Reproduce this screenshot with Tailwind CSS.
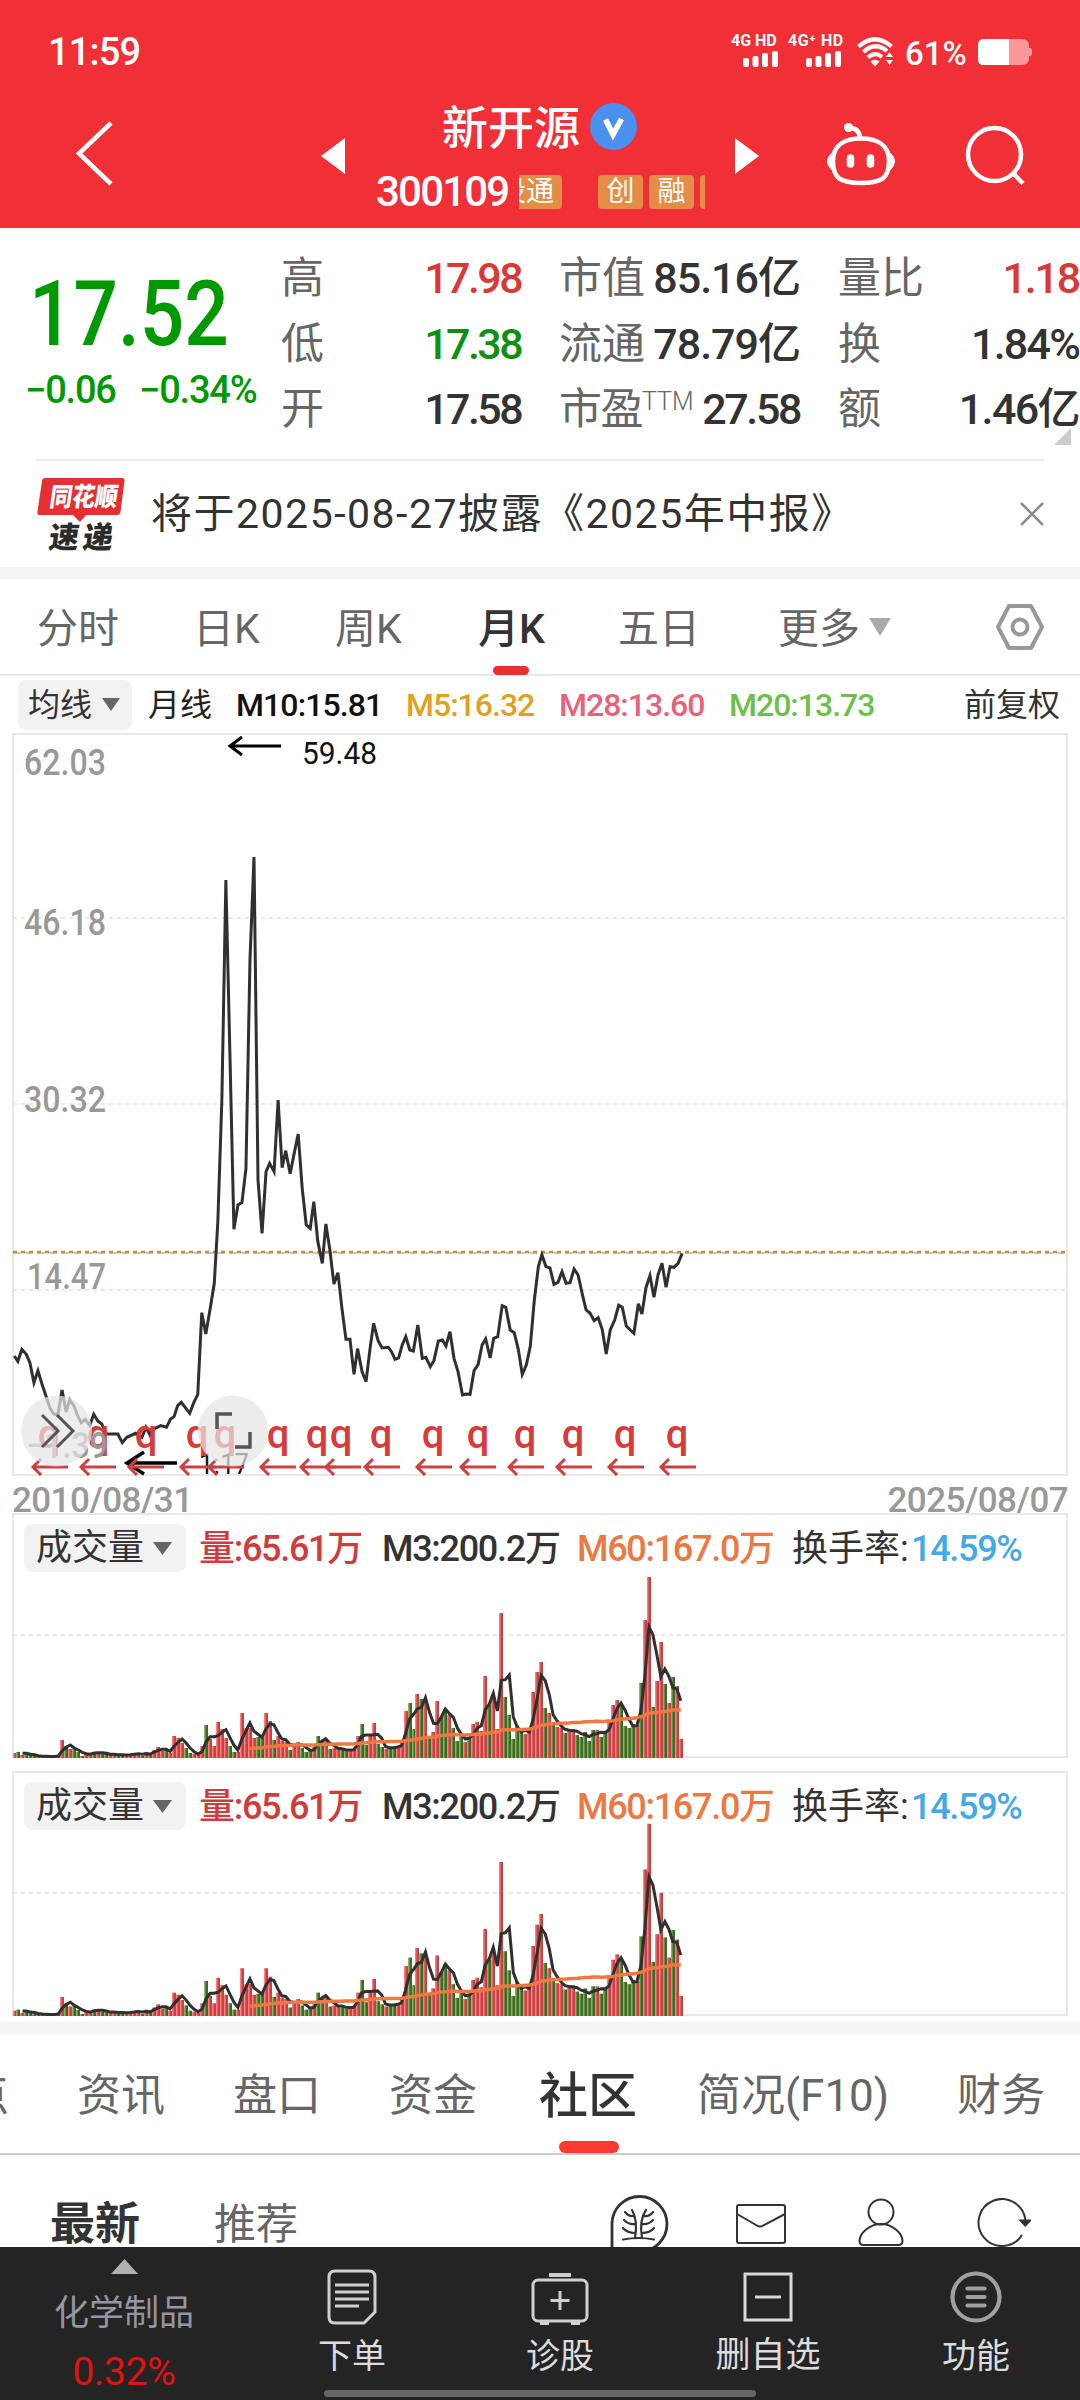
<!DOCTYPE html>
<html lang="zh-CN">
<head>
    <meta charset="UTF-8">
    <meta name="viewport" content="width=device-width, initial-scale=1.0">
    <title>新开源 300109</title>
    <script src="https://cdn.jsdelivr.net/npm/@tailwindcss/browser@4"></script>
</head>
<body class="bg-white">
<div class="w-[1080px] h-[2400px] overflow-hidden flex flex-col bg-white text-[#333] whitespace-nowrap font-['Roboto','Noto_Sans_CJK_SC',sans-serif]">

    <!-- Header -->
    <header class="h-[228px] shrink-0 bg-[#f12f37] text-white flex flex-col">
        <div class="h-[100px] pl-[48px] pr-[48px] flex items-center justify-between">
            <span class="pt-[3px] text-[38px] font-medium leading-none tracking-[-0.8px]">11:59</span>
            <div class="flex items-start h-8">
                <div class="w-[57px] flex flex-col">
                    <span class="text-[16px] leading-[14px] font-bold">4G HD</span>
                    <svg class="ml-3 mt-[3px] w-[35px] h-4" viewBox="0 0 35 16" fill="white"><rect y="7" width="6" height="9" rx="2"/><rect x="9.500" y="5" width="6" height="11" rx="2"/><rect x="19" y="2" width="6" height="14" rx="2"/><rect x="29" y="0" width="6" height="16" rx="2"/></svg>
                </div>
                <div class="w-[69px] flex flex-col">
                    <span class="text-[16px] leading-[14px] font-bold tracking-[0.6px]">4G⁺ HD</span>
                    <svg class="ml-[18px] mt-[3px] w-[35px] h-4" viewBox="0 0 35 16" fill="white"><rect y="7" width="6" height="9" rx="2"/><rect x="9.500" y="5" width="6" height="11" rx="2"/><rect x="19" y="2" width="6" height="14" rx="2"/><rect x="29" y="0" width="6" height="16" rx="2"/></svg>
                </div>
                <svg class="w-[38px] h-[30px] mt-[3px]" viewBox="0 0 38 30" fill="none" stroke="white" stroke-width="4.200">
                    <path d="M1.500 9.500Q18 -5 34.500 9.500"/><path d="M6.500 15Q18 4 30 14"/><path d="M11 20.500Q18 14 25 20"/>
                    <path d="M13.500 24.500Q18 21 22.500 24.500L18 29.500z" fill="white" stroke="none"/>
                    <path d="M29 20h7l-3.500-5zM29 23h7l-3.500 5z" fill="white" stroke="none"/>
                </svg>
                <span class="ml-2.5 mt-[7px] w-[73px] text-[33px] leading-[26px] font-medium">61%</span>
                <svg class="mt-1 w-[54px] h-7" viewBox="0 0 54 28"><path d="M6 1h38q7 0 7 7h0v2h1q2 0 2 3v2q0 3-2 3h-1v2q0 7-7 7H6q-6 0-6-6V7q0-6 6-6z" fill="#fb979b"/><path d="M31 1H6Q0 1 0 7v14q0 6 6 6h25z" fill="white"/></svg>
            </div>
        </div>
        <div class="h-[128px] flex">
            <svg class="ml-[72px] mt-5 w-[50px] h-[68px]" viewBox="0 0 50 68" fill="none" stroke="white" stroke-width="4.500"><path d="M39 3L7 33.500 39 64"/></svg>
            <svg class="ml-[199px] mt-[38px] w-6 h-9" viewBox="0 0 24 36" fill="white"><path d="M0 18L24 0v36z"/></svg>
            <div class="ml-[31px] w-[329px] flex flex-col">
                <div class="flex pl-[66px] h-[52px] items-center">
                    <span class="pt-1 text-[46px] leading-none font-medium">新开源</span>
                    <svg class="ml-[10px] w-[47px] h-[47px]" viewBox="0 0 47 47"><circle cx="23.500" cy="23.500" r="23.500" fill="#4a90ee"/><path d="M15.500 16.500L23 31.500 31.500 16" fill="none" stroke="white" stroke-width="5.500"/></svg>
                </div>
                <div class="mt-[23px] flex items-center h-[34px]">
                    <span class="w-[143px] shrink-0 text-[42px] leading-none font-medium tracking-[-1.8px]">300109</span>
                    <div class="w-[186px] h-[34px] flex overflow-hidden text-[28px] leading-[34px] text-center">
                        <span class="w-[43px] shrink-0 bg-[#e58c46] rounded-r flex justify-end pr-2 overflow-hidden">股通</span>
                        <span class="ml-9 w-[45px] shrink-0 bg-[#e58c46] rounded">创</span>
                        <span class="ml-1.5 w-[45px] shrink-0 bg-[#e58c46] rounded">融</span>
                        <span class="ml-1.5 w-5 bg-[#e58c46] rounded-l shrink-0"></span>
                    </div>
                </div>
            </div>
            <svg class="ml-[30px] mt-[38px] w-6 h-9" viewBox="0 0 24 36" fill="white"><path d="M24 18L0 0v36z"/></svg>
            <svg class="ml-[67px] mt-[22px] w-[70px] h-[64px]" viewBox="0 0 70 64" fill="none" stroke="white" stroke-width="4.500">
                <path d="M35 16.500C50 16.500 63 22 63 39S56 61 35 61 7 56 7 39 20 16.500 35 16.500z"/>
                <path d="M34 17Q34 6 23 6"/><circle cx="22.500" cy="5.500" r="4.500" fill="white" stroke="none"/>
                <path d="M6 32Q-2 39 6 47z M64 32Q72 39 64 47z" fill="white" stroke-width="2"/>
                <path d="M24.500 36v6M44.500 36v6" stroke-width="7.500" stroke-linecap="round"/>
            </svg>
            <svg class="ml-[68px] mt-[24px] w-[62px] h-[62px]" viewBox="0 0 62 62" fill="none" stroke="white" stroke-width="4.500"><circle cx="30.500" cy="30.500" r="26.500"/><path d="M49 49l10 10.500"/></svg>
        </div>
    </header>

    <!-- Quote -->
    <section class="h-[231px] shrink-0 flex relative">
        <div class="w-[281px] shrink-0 text-[#009900]">
            <div class="mt-[45px] ml-[29px] h-[84px] text-[90px] leading-[84px] font-medium origin-left scale-x-[0.87]">17.52</div>
            <div class="mt-[13px] ml-[25px] flex text-[38px] leading-[40px] font-medium tracking-[-1.2px]">
                <span class="w-[114px]">−0.06</span>
                <span>−0.34%</span>
            </div>
        </div>
        <div class="mt-[18px] w-[240px] shrink-0 text-[43px] leading-[65.500px]">
            <div class="flex justify-between"><span class="text-[#666]">高</span><span class="text-[#dc3838] font-medium tracking-[-2.6px]">17.98</span></div>
            <div class="flex justify-between"><span class="text-[#666]">低</span><span class="text-[#109010] font-medium tracking-[-2.6px]">17.38</span></div>
            <div class="flex justify-between"><span class="text-[#666]">开</span><span class="font-medium tracking-[-2.6px]">17.58</span></div>
        </div>
        <div class="mt-[18px] ml-[38px] w-[241px] shrink-0 text-[43px] leading-[65.500px]">
            <div class="flex justify-between"><span class="text-[#666]">市值</span><span class="font-medium tracking-[-1px]">85.16亿</span></div>
            <div class="flex justify-between"><span class="text-[#666]">流通</span><span class="font-medium tracking-[-1px]">78.79亿</span></div>
            <div class="flex justify-between"><span class="text-[#666] flex tracking-[-1.5px]">市盈<span class="text-[25px] leading-[50px] font-light tracking-normal">TTM</span></span><span class="font-medium tracking-[-2.4px]">27.58</span></div>
        </div>
        <div class="mt-[18px] ml-[38px] w-[241px] shrink-0 text-[43px] leading-[65.500px]">
            <div class="flex justify-between"><span class="text-[#666]">量比</span><span class="text-[#dc3838] font-medium tracking-[-2.2px]">1.18</span></div>
            <div class="flex justify-between"><span class="text-[#666]">换</span><span class="font-medium tracking-[-1.8px]">1.84%</span></div>
            <div class="flex justify-between"><span class="text-[#666]">额</span><span class="font-medium tracking-[-1.6px]">1.46亿</span></div>
        </div>
        <svg class="absolute right-[9px] bottom-[14px] w-[17px] h-[17px]" viewBox="0 0 17 17" fill="#ccc"><path d="M17 0v17H0z"/></svg>
    </section>

    <!-- News -->
    <section class="h-[108px] shrink-0 mx-9 border-t-2 border-[#eee] flex items-center">
        <svg class="w-[92px] h-[78px]" viewBox="0 0 92 78">
            <path d="M9 3h77q3 0 2.500 3l-4 31q-.5 3-3.500 3H50l-6 7-7-7H4q-3 0-2.600-3L6 6q.4-3 3-3z" fill="#e53033"/>
            <text x="17" y="31" font-size="26" font-weight="900" fill="white" textLength="68" lengthAdjust="spacingAndGlyphs" transform="skewX(-8)">同花顺</text>
            <text x="22" y="73" font-size="30" font-weight="900" fill="#2b2b2b" textLength="64" lengthAdjust="spacing" transform="skewX(-8)">速递</text>
        </svg>
        <span class="ml-[23px] text-[41px] leading-none tracking-[1.5px]">将于2025-08-27披露《2025年中报》</span>
        <svg class="ml-auto w-6 h-6" viewBox="0 0 24 24" stroke="#8a8a8a" stroke-width="2.500"><path d="M1 1l22 22M23 1L1 23"/></svg>
    </section>
    <div class="h-3 shrink-0 bg-[#f4f4f4]"></div>

    <!-- Period tabs -->
    <nav class="h-[97px] shrink-0 border-b-2 border-[#e9e9e9] flex relative text-[41px] leading-[101px] text-[#666]">
        <span class="ml-[37px] w-[156px]">分时</span>
        <span class="w-[142px]">日K</span>
        <span class="w-[143px]">周K</span>
        <span class="w-[140px] font-medium text-[#333]">月K</span>
        <span class="w-[160px]">五日</span>
        <span class="w-[91px]">更多</span>
        <svg class="mt-[39px] w-[22px] h-[18px]" viewBox="0 0 22 18" fill="#aaa"><path d="M0 0h22L11 18z"/></svg>
        <svg class="ml-[104px] mt-6 w-[50px] h-[48px]" viewBox="0 0 50 48" fill="none" stroke="#999" stroke-width="4" stroke-linejoin="round"><path d="M14 3h22l11 21-11 21H14L3 24z"/><circle cx="25" cy="24" r="7.500"/></svg>
        <span class="absolute left-[493px] -bottom-px w-9 h-[9px] rounded-full bg-[#e93030]"></span>
    </nav>

    <!-- Moving average legend -->
    <div class="h-[57px] shrink-0 flex items-center text-[32px] leading-[52px] font-medium">
        <span class="ml-[18px] w-[114px] h-[50px] pl-2.5 pr-3 rounded-lg bg-[#f2f2f2] flex items-center justify-between font-normal">均线<svg class="w-[18px] h-[13px]" viewBox="0 0 18 13" fill="#666"><path d="M0 0h18L9 13z"/></svg></span>
        <span class="ml-4 w-[88px] font-normal text-[#222]">月线</span>
        <span class="w-[170px] text-[#111] tracking-[-0.9px]">M10:15.81</span>
        <span class="w-[153px] text-[#e0a020] tracking-[-1px]">M5:16.32</span>
        <span class="w-[170px] text-[#e8637a] tracking-[-1px]">M28:13.60</span>
        <span class="w-[235px] text-[#6cc04a] tracking-[-1px]">M20:13.73</span>
        <span class="font-normal">前复权</span>
    </div>

    <!-- Price chart -->
    <svg class="w-[1080px] h-[743px] shrink-0 block" viewBox="0 0 1080 743" fill="none">
        <rect x="13" y="1" width="1054" height="741" stroke="#e8e8e8" stroke-width="2"/>
        <path d="M13 185h1054M13 371h1054M13 557h1054" stroke="#e8e8e8" stroke-width="2" stroke-dasharray="4 4"/>
        <g font-size="36" font-weight="500" fill="#999">
            <text x="24" y="42" textLength="82" lengthAdjust="spacingAndGlyphs">62.03</text>
            <text x="24" y="202" textLength="82" lengthAdjust="spacingAndGlyphs">46.18</text>
            <text x="24" y="379" textLength="82" lengthAdjust="spacingAndGlyphs">30.32</text>
            <text x="27" y="556" textLength="79" lengthAdjust="spacingAndGlyphs">14.47</text>
        </g>
        <path d="M13 520h1054" stroke="#c4b49c" stroke-width="1.500" stroke-dasharray="8 4"/>
        <path d="M13 519h1054" stroke="#cc8c40" stroke-width="2.500" stroke-dasharray="4 4"/>
        <path d="M281 13H230M242 4l-12 9 12 9" stroke="#000" stroke-width="3"/>
        <text x="302" y="31" font-size="31" fill="#111" textLength="75" lengthAdjust="spacingAndGlyphs">59.48</text>
        <polyline transform="translate(0 487) scale(.4464 .3333)" vector-effect="non-scaling-stroke" stroke="#303030" stroke-width="3" points="32,408 40,424 49,388 59,403 67,428 76,488 85,452 94,492 103,528 112,565 121,583 130,583 139,510 148,576 156,540 165,556 174,588 182,608 191,598 201,616 210,583 219,603 228,612 238,642 264,642 274,668 284,652 304,640 318,652 327,622 336,645 345,627 360,617 373,622 382,597 390,590 398,557 406,547 425,580 435,545 443,524 452,278 461,342 471,265 480,190 488,5 497,-360 506,-1020 515,-500 524,28 533,-45 542,-52 551,-155 560,-780 569,-1089 578,-120 587,40 596,-145 604,-170 614,-145 623,-360 632,-157 640,-208 650,-139 659,-200 668,-258 677,-95 686,15 695,25 703,-55 712,65 722,130 730,12 739,90 748,192 757,158 766,265 775,358 784,358 793,463 801,386 811,455 820,485 829,385 837,310 847,362 856,384 870,382 877,395 885,418 893,414 901,375 909,350 918,390 926,393 936,315 946,415 954,412 964,440 972,422 982,363 991,360 999,378 1008,335 1017,415 1026,455 1036,525 1044,522 1053,523 1062,452 1071,434 1080,375 1088,357 1098,414 1106,355 1115,350 1125,257 1133,262 1143,330 1152,338 1161,388 1170,463 1179,435 1188,378 1197,240 1206,140 1214,104 1223,140 1232,144 1241,193 1250,187 1259,155 1268,190 1277,188 1286,147 1295,165 1304,220 1313,270 1322,280 1331,302 1340,293 1349,328 1358,402 1367,330 1377,300 1386,256 1394,262 1403,318 1412,330 1420,340 1430,251 1438,282 1447,203 1456,167 1465,232 1474,165 1483,130 1492,202 1501,140 1510,142 1519,130 1528,100"/>
        <path d="M177 730H127M144 719l-17 11 17 11" stroke="#000" stroke-width="3.500"/>
        <text x="199" y="741" font-size="30" fill="#111" textLength="50" lengthAdjust="spacingAndGlyphs">1.17</text>
        <g id="dividends" font-size="40" font-weight="500"></g>
        <text x="26" y="725" font-size="36" font-weight="500" fill="#999" textLength="82" lengthAdjust="spacingAndGlyphs">−1.39</text>
        <circle cx="56.500" cy="698" r="35.500" fill="#e6e6e6" fill-opacity=".72"/>
        <circle cx="233" cy="698" r="35.500" fill="#e6e6e6" fill-opacity=".72"/>
        <path d="M42 682l16 16-16 16M57 682l16 16-16 16" stroke="#555" stroke-width="3"/>
        <path d="M217 696v-15h15M235 714h15v-15" stroke="#555" stroke-width="3.500"/>
    </svg>

    <div class="h-[37px] shrink-0 pl-[12px] pr-[12px] flex justify-between text-[35px] leading-[50px] font-medium text-[#999] tracking-[-0.6px]">
        <span>2010/08/31</span><span>2025/08/07</span>
    </div>

    <!-- Volume panels -->
    <section class="h-[258px] shrink-0 relative">
        <svg class="volume absolute inset-0 w-[1080px] h-[258px]" viewBox="0 0 1080 258" fill="none" data-scale="1"></svg>
        <div class="relative pt-[11px] flex text-[36px] leading-[51px] font-medium tracking-[-1.3px]">
            <span class="ml-6 w-[162px] h-[48px] pl-3 pr-3.5 rounded-lg bg-[#f2f2f2] flex items-center justify-between font-normal tracking-normal">成交量<svg class="w-[19px] h-[13px]" viewBox="0 0 19 13" fill="#666"><path d="M0 0h19L9.500 13z"/></svg></span>
            <span class="ml-[13px] w-[183px] text-[#d03c3c]">量:65.61万</span>
            <span class="w-[195px]">M3:200.2万</span>
            <span class="w-[215px] text-[#ec7843]">M60:167.0万</span>
            <span class="w-[119px] font-normal tracking-normal">换手率:</span>
            <span class="text-[#45a8e8]">14.59%</span>
        </div>
    </section>
    <section class="h-[251px] shrink-0 relative">
        <svg class="volume absolute inset-0 w-[1080px] h-[258px]" viewBox="0 0 1080 258" fill="none" data-scale="1.062"></svg>
        <div class="relative pt-[11px] flex text-[36px] leading-[51px] font-medium tracking-[-1.3px]">
            <span class="ml-6 w-[162px] h-[48px] pl-3 pr-3.5 rounded-lg bg-[#f2f2f2] flex items-center justify-between font-normal tracking-normal">成交量<svg class="w-[19px] h-[13px]" viewBox="0 0 19 13" fill="#666"><path d="M0 0h19L9.500 13z"/></svg></span>
            <span class="ml-[13px] w-[183px] text-[#d03c3c]">量:65.61万</span>
            <span class="w-[195px]">M3:200.2万</span>
            <span class="w-[215px] text-[#ec7843]">M60:167.0万</span>
            <span class="w-[119px] font-normal tracking-normal">换手率:</span>
            <span class="text-[#45a8e8]">14.59%</span>
        </div>
    </section>
    <div class="h-3 shrink-0 bg-[#f4f4f4]"></div>

    <!-- Section tabs -->
    <nav class="h-[121px] shrink-0 border-b-2 border-[#ccc] flex relative text-[44px] leading-[125px] text-[#666]">
        <span class="w-[77px] flex"><span class="-ml-[35px]">点</span></span>
        <span class="w-[156px]">资讯</span>
        <span class="w-[156px]">盘口</span>
        <span class="w-[150px]">资金</span>
        <span class="w-[158px] text-[49px] font-medium text-[#333]">社区</span>
        <span class="w-[260px]">简况(F10)</span>
        <span>财务</span>
        <span class="absolute left-[559px] bottom-0 w-[60px] h-3 rounded-full bg-[#fb3a30]"></span>
    </nav>

    <section class="h-[92px] shrink-0 pl-[50px] flex overflow-hidden leading-[139px]">
        <span class="w-[164px] text-[45px] font-bold">最新</span>
        <span class="w-[396px] text-[42px] text-[#666]">推荐</span>
        <svg class="-ml-px mt-[37px] w-[62px] h-[62px] shrink-0" viewBox="0 0 62 62" fill="none" stroke="#333" stroke-width="2.200" stroke-linecap="round">
            <path d="M3 60V31A27.500 27.500 0 1 1 31 59.500H3" stroke-width="2.800"/>
            <path d="M14 47.500q16-3 31 0M26 46Q29 28 23 18M33 46Q30 28 37 18M16 20q4 5 9 4M15 28q5 5 11 4M14 36q4 5 12 5M44 20q-4 5-9 4M44 28q-5 5-11 4M45 36q-4 5-12 5"/>
        </svg>
        <svg class="ml-[64px] mt-[48px] w-[52px] h-[42px] shrink-0" viewBox="0 0 52 42" fill="none" stroke="#333" stroke-width="2"><rect x="2" y="2" width="48" height="38" rx="2"/><path d="M2 11l19 11q4 3 8 0l21-11"/></svg>
        <svg class="ml-[71px] mt-[43px] w-[46px] h-[48px] shrink-0" viewBox="0 0 46 48" fill="none" stroke="#333" stroke-width="2"><circle cx="23" cy="14" r="12.500"/><path d="M23 26C12 26 1.500 35 1.500 43q0 4 4 4h35q4 0 4-4C44.500 35 34 26 23 26z"/></svg>
        <svg class="ml-[73px] mt-[43px] w-[54px] h-[50px] shrink-0" viewBox="0 0 54 50" fill="none" stroke="#333" stroke-width="2"><path d="M48.500 23A23.500 23.500 0 1 0 45 37"/><path d="M43.500 22.500h9.500l-4.700 5z" fill="#333"/></svg>
    </section>

    <!-- Bottom bar -->
    <footer class="h-[153px] shrink-0 bg-[#242424] relative flex text-[34px] leading-[40px] text-[#dcdcdc]">
        <div class="w-[248px] flex flex-col items-center">
            <svg class="mt-3 w-[27px] h-[15px]" viewBox="0 0 27 15" fill="#b0b0b0"><path d="M0 15h27L13.500 0z"/></svg>
            <span class="mt-[20px] text-[35px] leading-[40px] text-[#9696a0]">化学制品</span>
            <span class="mt-[18px] text-[39px] leading-[40px] text-[#e01212] tracking-[-0.3px]">0.32%</span>
        </div>
        <div class="w-[208px] flex flex-col items-center">
            <svg class="mt-[22px] w-[50px] h-[56px]" viewBox="0 0 50 56" fill="none" stroke="#d0d0d0" stroke-width="3"><path d="M8 2h34q6 0 6 6v35L37 54H8q-6 0-6-6V8q0-6 6-6zM8 16h34M8 23h34M8 30h34M8 37h24"/></svg>
            <span class="mt-[11px]">下单</span>
        </div>
        <div class="w-[208px] flex flex-col items-center">
            <svg class="mt-[25px] w-[58px] h-[53px]" viewBox="0 0 58 53" fill="none" stroke="#d0d0d0" stroke-width="3"><path d="M18 3h22M9 51.500h9M40 51.500h9" stroke-width="4"/><rect x="2" y="8" width="54" height="41" rx="5"/><path d="M29 19v19M19.500 28.500h19"/></svg>
            <span class="mt-[11px]">诊股</span>
        </div>
        <div class="w-[208px] flex flex-col items-center">
            <svg class="mt-[25px] w-[50px] h-[50px]" viewBox="0 0 50 50" fill="none" stroke="#d8d8d8" stroke-width="3"><rect x="2" y="2" width="46" height="46"/><path d="M12 25h26"/></svg>
            <span class="mt-3.5 text-[35px]">删自选</span>
        </div>
        <div class="w-[208px] flex flex-col items-center">
            <svg class="mt-[24px] w-[52px] h-[52px]" viewBox="0 0 52 52" fill="none" stroke="#a0a0a0" stroke-width="4.200" stroke-linecap="round"><circle cx="26" cy="26" r="23.500"/><path d="M17.500 17.500h17M17.500 26h17M17.500 34.500h17"/></svg>
            <span class="mt-[13px]">功能</span>
        </div>
        <span class="absolute left-[324px] bottom-[3px] w-[432px] h-[7px] rounded-full bg-[#666]"></span>
    </footer>
</div>

<script>
    // Dividend markers along the bottom of the price chart
    const dividends = [[49, 32], [98, 80], [146, 128], [197, 180], [225, 208], [278, 260], [317, 300], [341, 325], [381, 364], [433, 416], [478, 460], [525, 508], [573, 556], [625, 608], [677, 660]];
    document.getElementById('dividends').innerHTML = dividends.map(([x, a]) =>
        `<text x="${x}" y="715" fill="#d93a3a" text-anchor="middle">q</text><path d="M${a + 36} 734H${a + 1}M${a + 9} 726l-8 8 8 8" stroke="#d04040" stroke-width="3"/>`
    ).join('');

    // Monthly volume, negative = down month
    const volumes = [5, -6, 3, -5, -3, -2, -2, -1.5, -1.5, -1.5, -1.5, -3, 18, -12, 9, -9, -6, -2, 5, 4, -6, 6, -4, -4, 3, 4, -3, -3, 3, 4, 4, 5, -2, 6, -4, 8, 11, 7, -8, 5, 22, 20, 15, -10, -5, 4, 3, 12, -33, 19, 12, 36, 29, 20, -12, -6, 6, 45, 30, 30, 20, -21, -21, 45, 37, -18, 22, 17, 16, -8, 14, 16, -10, -6, -7, 11, -22, -17, 19, -9, 10, 10, -8, -7, 9, 9, 22, -34, -13, 22, 35, -14, -11, 9, -11, -11, 11, 15, 47, -55, -29, 64, -59, 58, -20, 26, 57, -41, -49, 43, -30, -17, -24, 16, -20, 34, 36, 27, 82, -53, 59, 29, 145, -61, -43, -19, -32, -27, 24, 27, 66, 86, 96, -50, 45, -35, 31, 30, -25, 28, 29, -23, -21, -26, -17, -28, 28, -21, -27, 37, 53, 58, -54, -32, -30, -34, 33, -75, 138, 181, -51, 77, 116, -74, 55, -81, 72, 19];
    const base = 245, step = 3.99;

    function average(n, start, scale) {
        const pts = [];
        for (let i = start; i < volumes.length; i++) {
            const part = volumes.slice(Math.max(0, i - n + 1), i + 1).map(Math.abs);
            const y = base - scale * part.reduce((a, b) => a + b, 0) / part.length;
            pts.push(`${(14.5 + i * step).toFixed(1)},${y.toFixed(1)}`);
        }
        return pts.join(' ');
    }

    document.querySelectorAll('.volume').forEach(svg => {
        const scale = parseFloat(svg.dataset.scale);
        const bars = volumes.map((v, i) => {
            const h = Math.abs(v) * scale, x = Math.round(12.5 + i * step);
            const [light, dark] = v > 0 ? ['#fc8080', '#c54343'] : ['#8cb070', '#3c6a20'];
            return `<rect x="${x}" y="${base - h}" width="2" height="${h}" fill="${light}"/><rect x="${x + 1.5}" y="${base - h}" width="2.5" height="${h}" fill="${dark}"/>`;
        }).join('');
        svg.innerHTML = `
            <rect x="13" y="1" width="1054" height="243" stroke="#e8e8e8" stroke-width="2"/>
            <path d="M13 122h1054" stroke="#e8e8e8" stroke-width="2" stroke-dasharray="4 4"/>
            ${bars}
            <polyline points="${average(3, 2, scale)}" stroke="#303030" stroke-width="3"/>
            <polyline points="${average(60, 59, scale)}" stroke="#f07840" stroke-width="3.500"/>`;
    });
</script>
</body>
</html>
